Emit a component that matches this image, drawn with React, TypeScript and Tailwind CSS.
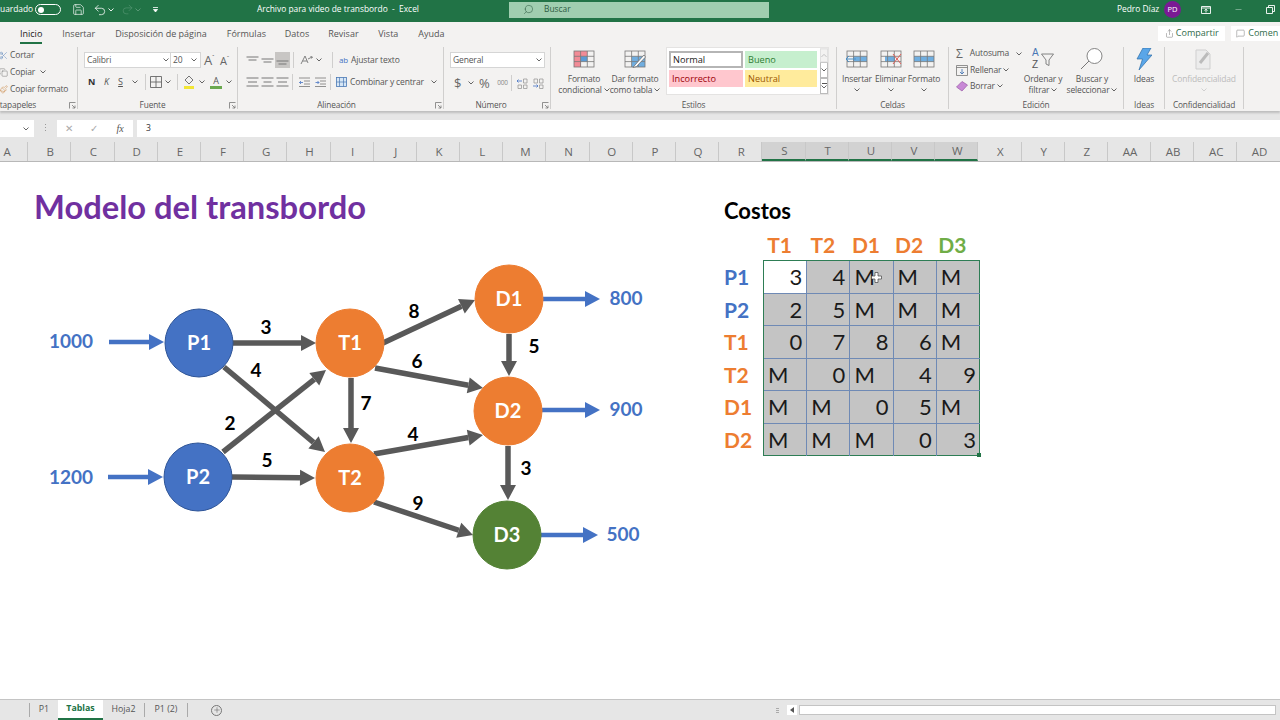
import React from "react";
import { Search, Scissors, Copy, Paintbrush, Save, Undo2, Redo2, Minus, Share, MessageSquare, Plus } from "lucide-react";

const Chev = ({ c = "#555" }: { c?: string }) => (
  <svg width="6" height="4" viewBox="0 0 6 4" className="shrink-0"><path d="M0.5 0.5 L3 3 L5.5 0.5" fill="none" stroke={c} strokeWidth="0.9" /></svg>
);
const Launcher = () => (
  <svg width="7" height="7" viewBox="0 0 7 7"><path d="M0.5 6.5V0.5H6.5M3 3l3 3M6 3.5V6H3.5" fill="none" stroke="#777" strokeWidth="0.8" /></svg>
);
const Lines = ({ w = [12, 12, 12], y = [2, 6, 10] }: { w?: number[]; y?: number[] }) => (
  <svg width="13" height="12" viewBox="0 0 13 12" className="shrink-0">
    {w.map((wi, i) => (
      <line key={i} x1={(13 - wi) / 2} x2={(13 + wi) / 2} y1={y[i]} y2={y[i]} stroke="#777" strokeWidth="1" />
    ))}
  </svg>
);
const VSep = () => <div className="w-px h-[16px] bg-[#cfcecd] shrink-0" />;
const GSep = () => <div className="w-px h-[62px] self-center bg-[#d0cfce] shrink-0" />;

const Group = ({ w, label, launcher, children, labelClass }: { w: string; label: string; launcher?: boolean; children: React.ReactNode; labelClass?: string }) => (
  <div className={`${w} flex flex-col shrink-0 h-[67px]`}>
    <div className="h-[55px] shrink-0 flex flex-col">{children}</div>
    <div className="relative h-[12px] flex items-center justify-center">
      <span className={`text-[8.3px] text-[#555] ${labelClass ?? ""}`}>{label}</span>
      {launcher && <span className="absolute right-[1px] top-[3px] flex"><Launcher /></span>}
    </div>
  </div>
);

const GridIcon = ({ children, w = 22, h = 18 }: { children: React.ReactNode; w?: number; h?: number }) => (
  <svg width={w} height={h} viewBox="0 0 22 18" className="shrink-0">{children}</svg>
);
const tableLines = (
  <g fill="none" stroke="#777" strokeWidth="0.8">
    <rect x="1" y="1" width="20" height="16" />
    <path d="M1 6.3H21M1 11.6H21M7.6 1V17M14.3 1V17" />
  </g>
);

const LargeBtn = ({ icon, l1, l2, w }: { icon: React.ReactNode; l1: string; l2: React.ReactNode; w: string }) => (
  <div className={`${w} shrink-0 flex flex-col items-center`}>
    <div className="h-[24px] mt-[3px] flex items-center justify-center">{icon}</div>
    <div className="text-[8.5px] tracking-[-0.15px] leading-[11px] mt-[2px] whitespace-nowrap text-[#555]">{l1}</div>
    <div className="text-[8.5px] tracking-[-0.15px] leading-[11px] whitespace-nowrap flex items-center gap-[2px] h-[11px] text-[#555]">{l2}</div>
  </div>
);

const columns = ["A","B","C","D","E","F","G","H","I","J","K","L","M","N","O","P","Q","R","S","T","U","V","W","X","Y","Z","AA","AB","AC","AD"];
const selected = new Set(["S","T","U","V","W"]);

const tableRows: { label: string; cls: string; cells: string[] }[] = [
  { label: "P1", cls: "text-[#4472c4]", cells: ["3","4","M","M","M"] },
  { label: "P2", cls: "text-[#4472c4]", cells: ["2","5","M","M","M"] },
  { label: "T1", cls: "text-[#ed7d31]", cells: ["0","7","8","6","M"] },
  { label: "T2", cls: "text-[#ed7d31]", cells: ["M","0","M","4","9"] },
  { label: "D1", cls: "text-[#ed7d31]", cells: ["M","M","0","5","M"] },
  { label: "D2", cls: "text-[#ed7d31]", cells: ["M","M","M","0","3"] },
];

const Arrow = ({ x1, y1, x2, y2, color, sw = 5.5, hl = 15, hw = 16 }: { x1: number; y1: number; x2: number; y2: number; color: string; sw?: number; hl?: number; hw?: number }) => {
  const d = Math.hypot(x2 - x1, y2 - y1);
  const ux = (x2 - x1) / d;
  const uy = (y2 - y1) / d;
  const bx = x2 - ux * hl;
  const by = y2 - uy * hl;
  return (
    <g>
      <line x1={x1} y1={y1} x2={bx} y2={by} stroke={color} strokeWidth={sw} />
      <polygon points={`${x2},${y2} ${bx - (uy * hw) / 2},${by + (ux * hw) / 2} ${bx + (uy * hw) / 2},${by - (ux * hw) / 2}`} fill={color} />
    </g>
  );
};

const gray = "#595959";
const blue = "#4472c4";
const arrows = [
  [233,343,316,343],[224,367,325,452],[223,452,326,370],[232,477,315,478],
  [383,343,475,300],[375,368,483,388],[351,378,351,443],[374,454,483,435],[374,502,473,535],
  [509,334,509,376],[508,446,508,500],
];
const blueArrows = [[109,342,164,342],[108,477,163,477],[543,299,600,299],[542,410,600,410],[541,535,598,535]];
const nodes: [number, number, string, string, string][] = [
  [199,343,"P1","#4472c4","#2f5597"],[198,477,"P2","#4472c4","#2f5597"],
  [350,343,"T1","#ed7d31","#ed7d31"],[350,478,"T2","#ed7d31","#ed7d31"],
  [509,299,"D1","#ed7d31","#ed7d31"],[508,411,"D2","#ed7d31","#ed7d31"],[507,535,"D3","#548235","#548235"],
];
const blueLabels: [number, number, string][] = [[71,341,"1000"],[71,477,"1200"],[626,298,"800"],[626,409,"900"],[623,534,"500"]];
const blackLabels: [number, number, string][] = [[266,327,"3"],[256,370,"4"],[230,423,"2"],[267,460,"5"],[414,311,"8"],[417,361,"6"],[366,403,"7"],[413,434,"4"],[418,503,"9"],[534,346,"5"],[526,468,"3"]];

export default function App() {
  return (
    <div className="w-[1280px] h-[720px] overflow-hidden flex flex-col bg-white text-[#444] [font-family:'Open_Sans',sans-serif]">
      {/* Title bar */}
      <div className="h-[22px] shrink-0 bg-[#217346] flex items-center pb-[3px] text-white text-[8.4px]">
        <span className="w-[35px] shrink-0">uardado</span>
        <div className="w-[26px] h-[11px] rounded-full border border-white flex items-center pl-[2px] shrink-0">
          <div className="w-[6px] h-[6px] rounded-full bg-white" />
        </div>
        <Save size={13} strokeWidth={1.2} className="ml-[11px] shrink-0" />
        <Undo2 size={14} strokeWidth={1.3} className="ml-[8px] shrink-0" />
        <span className="ml-[1px]"><Chev c="#fff" /></span>
        <Redo2 size={13} strokeWidth={1} className="ml-[7px] text-[#5f9c7b] shrink-0" />
        <span className="ml-[1px]"><Chev c="#5f9c7b" /></span>
        <svg width="7" height="7" viewBox="0 0 7 7" className="ml-[11px] shrink-0"><path d="M1 1.5H6M1.5 3.5L3.5 6L5.5 3.5Z" stroke="#fff" strokeWidth="0.8" fill="#fff" /></svg>
        <span className="ml-[98px] w-[252px] shrink-0 whitespace-pre">Archivo para video de transbordo  -  Excel</span>
        <div className="w-[260px] h-[16px] bg-[#a0ceb0] flex items-center text-[#2d5c42] shrink-0">
          <Search size={11} strokeWidth={1.2} className="ml-[14px] -scale-x-100" />
          <span className="ml-[10px]">Buscar</span>
        </div>
        <span className="ml-[348px] w-[47px] shrink-0 whitespace-nowrap">Pedro Díaz</span>
        <div className="w-[17px] h-[17px] rounded-full bg-[#7a1a94] flex items-center justify-center text-[7.5px] shrink-0">PD</div>
        <svg width="10" height="8" viewBox="0 0 10 8" className="ml-[20px] shrink-0"><path d="M0.5 0.5H9.5V7.5H0.5ZM0.5 2H9.5M5 3.5V6.5M3.5 4.5L5 3.2L6.5 4.5" fill="none" stroke="#fff" strokeWidth="0.9" /></svg>
        <Minus size={9} strokeWidth={1} className="ml-[23px] shrink-0" />
        <svg width="9" height="9" viewBox="0 0 9 9" className="ml-[23px] shrink-0"><path d="M2.5 2.5V0.5H8.5V6.5H6.5M0.5 2.5H6.5V8.5H0.5Z" fill="none" stroke="#fff" strokeWidth="0.9" /></svg>
      </div>

      {/* Tabs row */}
      <div className="h-[22px] shrink-0 bg-[#f3f2f1] flex items-center text-[9px] text-[#555] whitespace-nowrap">
        <div className="ml-[20px] w-[23px] h-[22px] pt-[1px] flex items-center justify-center relative text-[#222]">
          Inicio
          <div className="absolute bottom-0 left-0 right-0 h-[2px] bg-[#217346]" />
        </div>
        <span className="ml-[20px] w-[33px] pt-[1px]">Insertar</span>
        <span className="ml-[20px] w-[93px] pt-[1px]">Disposición de página</span>
        <span className="ml-[20px] w-[38px] pt-[1px]">Fórmulas</span>
        <span className="ml-[20px] w-[25px] pt-[1px]">Datos</span>
        <span className="ml-[19px] w-[30px] pt-[1px]">Revisar</span>
        <span className="ml-[20px] w-[20px] pt-[1px]">Vista</span>
        <span className="ml-[20px] w-[26px] pt-[1px]">Ayuda</span>
        <div className="ml-[714px] w-[67px] h-[15px] bg-white flex items-center justify-center gap-[2px] text-[#2f6b4b] shrink-0">
          <Share size={9} strokeWidth={1.2} className="text-[#666]" />
          <span>Compartir</span>
        </div>
        <div className="ml-[6px] w-[60px] h-[15px] bg-white flex items-center gap-[3px] pl-[5px] text-[#2f6b4b] shrink-0 overflow-hidden">
          <MessageSquare size={9} strokeWidth={1.2} className="text-[#666] shrink-0" />
          <span>Comen</span>
        </div>
      </div>

      {/* Ribbon */}
      <div className="h-[67px] shrink-0 bg-[#f3f2f1] flex shadow-[0_2px_2px_rgba(0,0,0,0.18)] relative z-10 text-[8.5px] tracking-[-0.15px] text-[#555] whitespace-nowrap">
        <Group w="w-[77px]" label="tapapeles" launcher labelClass="-ml-[41px]">
          <div className="pt-[2px] flex flex-col">
            <div className="h-[17px] pt-[1px] flex items-center gap-[2px] -ml-[1px]"><Scissors size={9} strokeWidth={1.2} className="text-[#4a78b5] w-[9px]" /><span>Cortar</span></div>
            <div className="h-[17px] pt-[1px] flex items-center gap-[2px] -ml-[1px]"><Copy size={9} strokeWidth={1.2} className="text-[#666] w-[9px]" /><span>Copiar</span><span className="ml-[3px]"><Chev /></span></div>
            <div className="h-[17px] pt-[1px] flex items-center gap-[2px] -ml-[1px]"><Paintbrush size={9} strokeWidth={1.2} className="text-[#c77f35] w-[9px]" /><span>Copiar formato</span></div>
          </div>
        </Group>
        <GSep />
        <Group w="w-[159px]" label="Fuente" launcher labelClass="-ml-[10px]">
          <div className="pl-[6px] pt-[8px] flex items-center">
            <div className="w-[87px] h-[16px] bg-white border border-[#d5d5d5] flex items-center pl-[2px] shrink-0"><span className="w-[76px]">Calibri</span><Chev /></div>
            <div className="w-[30px] h-[16px] bg-white border border-[#d5d5d5] border-l-0 flex items-center pl-[2px] shrink-0"><span className="w-[18px]">20</span><Chev /></div>
            <span className="ml-[3px] w-[16px] text-[13px] text-[#666] leading-none flex">A<span className="text-[6px]">ˆ</span></span>
            <span className="w-[15px] text-[11px] text-[#666] leading-none flex">A<span className="text-[6px]">ˇ</span></span>
          </div>
          <div className="pl-[6px] mt-[6px] h-[16px] flex items-center">
            <span className="w-[15px] font-bold text-[#333] text-[9px] text-center">N</span>
            <span className="w-[15px] italic text-center text-[9px]">K</span>
            <span className="w-[13px] underline text-center text-[9px]">S</span>
            <span className="w-[14px] pl-[5px]"><Chev /></span>
            <span className="ml-[4px]"><VSep /></span>
            <svg width="12" height="12" viewBox="0 0 12 12" className="ml-[4px] shrink-0"><path d="M0.5 0.5H11.5V11.5H0.5ZM6 0.5V11.5M0.5 6H11.5" fill="none" stroke="#666" strokeWidth="0.9" /></svg>
            <span className="ml-[3px] w-[12px]"><Chev /></span>
            <VSep />
            <svg width="12" height="14" viewBox="0 0 12 14" className="ml-[5px] shrink-0"><path d="M6 1L10 5L6 9L2 5Z" fill="none" stroke="#666" strokeWidth="0.9" /><rect x="1" y="11" width="10" height="3" fill="#f2e635" /></svg>
            <span className="ml-[4px] w-[11px]"><Chev /></span>
            <span className="w-[12px] relative h-[14px] flex justify-center text-[9px] leading-[11px]">A<span className="absolute left-0 right-0 bottom-0 h-[3px] bg-[#6aa84f]" /></span>
            <span className="ml-[4px]"><Chev /></span>
          </div>
        </Group>
        <GSep />
        <Group w="w-[205px]" label="Alineación" launcher labelClass="-ml-[8px]">
          <div className="pl-[8px] pt-[8px] flex items-center h-[24px]">
            <Lines w={[12,8,0]} y={[3,6,20]} />
            <span className="ml-[2px]"><Lines w={[12,8,0]} y={[5,8,20]} /></span>
            <div className="ml-[1px] w-[15px] h-[16px] bg-[#c8c6c4] flex items-center justify-center"><Lines w={[12,8,0]} y={[7,10,20]} /></div>
            <span className="ml-[3px]"><VSep /></span>
            <svg width="13" height="11" viewBox="0 0 13 11" className="ml-[6px] shrink-0"><path d="M1 9L5 1L8 8M2.5 6H7M8 4L12 2M10.5 1.5L12.5 2L11.5 3.5" fill="none" stroke="#777" strokeWidth="0.9" /></svg>
            <span className="ml-[3px] w-[16px]"><Chev /></span>
            <VSep />
            <span className="ml-[6px] text-[#4472c4] text-[8px] leading-none w-[12px]">ab</span>
            <span>Ajustar texto</span>
          </div>
          <div className="pl-[8px] mt-[6px] h-[16px] flex items-center">
            <Lines w={[12,9,12]} y={[2,6,10]} />
            <span className="ml-[2px]"><Lines w={[12,8,12]} y={[2,6,10]} /></span>
            <span className="ml-[2px]"><Lines w={[12,9,12]} y={[2,6,10]} /></span>
            <span className="ml-[3px]"><VSep /></span>
            <svg width="11" height="10" viewBox="0 0 11 10" className="ml-[6px] shrink-0"><path d="M0 1H11M5 4H11M5 7H11M0 9.5H11" stroke="#777" strokeWidth="0.8" /><path d="M4 5.5H0.5M2 4L0.5 5.5L2 7" fill="none" stroke="#4472c4" strokeWidth="0.8" /></svg>
            <svg width="11" height="10" viewBox="0 0 11 10" className="ml-[5px] shrink-0"><path d="M0 1H11M5 4H11M5 7H11M0 9.5H11" stroke="#777" strokeWidth="0.8" /><path d="M0.5 5.5H4M2.5 4L4 5.5L2.5 7" fill="none" stroke="#4472c4" strokeWidth="0.8" /></svg>
            <span className="ml-[4px]"><VSep /></span>
            <svg width="11" height="10" viewBox="0 0 11 10" className="ml-[5px] shrink-0"><rect x="0.5" y="0.5" width="10" height="9" fill="#d6e6f5" stroke="#4a78b5" strokeWidth="0.8" /><path d="M0.5 5H10.5M3.5 0.5V9.5M7.5 0.5V9.5" stroke="#4a78b5" strokeWidth="0.7" /></svg>
            <span className="ml-[3px] w-[81px]">Combinar y centrar</span>
            <Chev />
          </div>
        </Group>
        <GSep />
        <Group w="w-[106px]" label="Número" launcher labelClass="-ml-[12px]">
          <div className="pl-[6px] pt-[8px]">
            <div className="w-[95px] h-[16px] bg-white border border-[#d5d5d5] flex items-center justify-between px-[2px]"><span>General</span><Chev /></div>
          </div>
          <div className="pl-[10px] mt-[6px] h-[18px] flex items-center">
            <span className="text-[13px] text-[#666] w-[14px] leading-none">$</span>
            <span className="w-[11px]"><Chev /></span>
            <span className="text-[13px] text-[#666] w-[15px] leading-none">%</span>
            <span className="text-[6.5px] text-[#888] w-[17px] text-center">000</span>
            <VSep />
            <svg width="11" height="11" viewBox="0 0 11 11" className="ml-[5px] shrink-0"><path d="M0 3H5M1.5 1.5L0 3L1.5 4.5" fill="none" stroke="#4472c4" strokeWidth="0.8" /><path d="M6.5 1H10V5H6.5ZM1 7H4.5V10.5H1ZM6.5 7H10V10.5H6.5Z" fill="none" stroke="#999" strokeWidth="0.8" /></svg>
            <svg width="11" height="11" viewBox="0 0 11 11" className="ml-[5px] shrink-0"><path d="M0 8H5M3.5 6.5L5 8L3.5 9.5" fill="none" stroke="#4472c4" strokeWidth="0.8" /><path d="M6.5 1H10V5H6.5ZM1 1H4.5V5H1ZM6.5 7H10V10.5H6.5Z" fill="none" stroke="#999" strokeWidth="0.8" /></svg>
          </div>
        </Group>
        <GSep />
        <Group w="w-[285px]" label="Estilos">
          <div className="flex">
            <div className="w-[7px] shrink-0" />
            <LargeBtn w="w-[52px]" l1="Formato" l2={<>condicional <Chev /></>} icon={
              <GridIcon>
                <rect x="1" y="1" width="7" height="16" fill="#f28b96" />
                <rect x="7.6" y="1" width="6.7" height="5.3" fill="#f28b96" />
                <rect x="7.6" y="6.3" width="6.7" height="5.3" fill="#5b9bd5" />
                {tableLines}
              </GridIcon>
            } />
            <LargeBtn w="w-[50px]" l1="Dar formato" l2={<>como tabla <Chev /></>} icon={
              <GridIcon>
                <rect x="7.6" y="6.3" width="13.4" height="10.7" fill="#70aee0" />
                {tableLines}
                <path d="M20 5L11 15L9 17.5L12.5 16.5L21.5 7Z" fill="#fff" stroke="#666" strokeWidth="0.7" />
              </GridIcon>
            } />
            <div className="ml-[6px] mt-[3px] w-[163px] h-[48px] bg-white flex border border-[#e4e3e2] shrink-0">
              <div className="w-[150px] shrink-0 grid grid-cols-[74px_72px] gap-x-[2px] gap-y-[2px] pl-[2px] pt-[3px] text-[9.2px] tracking-normal auto-rows-[17px]">
                <div className="border-2 border-[#b5b5b5] bg-white text-[#222] flex items-center pl-[2px]">Normal</div>
                <div className="bg-[#c6efce] text-[#2f7d33] flex items-center pl-[3px]">Bueno</div>
                <div className="bg-[#ffc7ce] text-[#9c0006] flex items-center pl-[3px]">Incorrecto</div>
                <div className="bg-[#ffeb9c] text-[#9c5700] flex items-center pl-[3px]">Neutral</div>
              </div>
              <div className="ml-[3px] w-[10px] flex flex-col bg-[#f3f2f1]">
                <div className="h-[15px] border border-[#e0e0e0] flex items-center justify-center rotate-180"><Chev c="#bbb" /></div>
                <div className="h-[16px] border border-[#bbb] bg-white flex items-center justify-center"><Chev /></div>
                <div className="h-[17px] border border-[#bbb] bg-white flex flex-col gap-[1px] items-center justify-center"><div className="w-[5px] h-px bg-[#555]" /><Chev /></div>
              </div>
            </div>
          </div>
        </Group>
        <GSep />
        <Group w="w-[111px]" label="Celdas">
          <div className="flex pl-[3px]">
            <LargeBtn w="w-[34px]" l1="Insertar" l2={<Chev />} icon={
              <GridIcon><rect x="7" y="6.3" width="14" height="5.3" fill="#70aee0" />{tableLines}<path d="M10 9H0M3 6L0 9L3 12" fill="none" stroke="#4a90c8" strokeWidth="1" /></GridIcon>
            } />
            <LargeBtn w="w-[33px]" l1="Eliminar" l2={<Chev />} icon={
              <GridIcon><rect x="5" y="6.3" width="10" height="5.3" fill="#70aee0" />{tableLines}<path d="M13 4L21 14M21 4L13 14" fill="none" stroke="#e0605a" strokeWidth="1" /></GridIcon>
            } />
            <LargeBtn w="w-[34px]" l1="Formato" l2={<Chev />} icon={
              <GridIcon><rect x="1" y="6.3" width="20" height="5.3" fill="#70aee0" />{tableLines}</GridIcon>
            } />
          </div>
        </Group>
        <GSep />
        <Group w="w-[174px]" label="Edición">
          <div className="flex">
            <div className="w-[73px] pl-[7px] pt-[1px] flex flex-col shrink-0">
              <div className="h-[17px] flex items-center"><span className="w-[14px] text-[12px] leading-none text-[#666]">Σ</span><span className="w-[47px]">Autosuma</span><Chev /></div>
              <div className="h-[16px] flex items-center"><svg width="12" height="11" viewBox="0 0 12 11" className="mr-[2px] shrink-0"><path d="M0.5 0.5H11.5V10.5H0.5ZM0.5 2.5H11.5" fill="none" stroke="#777" strokeWidth="0.8" /><path d="M6 4V9M4 7L6 9L8 7" fill="none" stroke="#4a78b5" strokeWidth="0.9" /></svg><span className="mr-[2px]">Rellenar</span><Chev /></div>
              <div className="h-[16px] flex items-center"><svg width="12" height="11" viewBox="0 0 12 11" className="mr-[2px] shrink-0"><path d="M0.5 6L6 0.5L11.5 4L6 10Z" fill="#c889d6" stroke="#9a5aa8" strokeWidth="0.7" /></svg><span className="mr-[2px]">Borrar</span><Chev /></div>
            </div>
            <div className="ml-[-2px]"><LargeBtn w="w-[46px]" l1="Ordenar y" l2={<>filtrar <Chev /></>} icon={
              <div className="w-[22px] h-[24px] flex items-center">
                <div className="w-[9px] flex flex-col text-[10px] leading-[12px] tracking-normal [font-family:'Liberation_Sans',sans-serif]">
                  <span className="text-[#4a78b5]">A</span>
                  <span className="text-[#555]">Z</span>
                </div>
                <svg width="13" height="13" viewBox="0 0 13 13" className="shrink-0"><path d="M0.5 1H12.5L8 7V12.5L5 11V7Z" fill="none" stroke="#777" strokeWidth="0.9" /></svg>
              </div>
            } /></div>
            <LargeBtn w="w-[52px]" l1="Buscar y" l2={<>seleccionar <Chev /></>} icon={
              <svg width="24" height="22" viewBox="0 0 24 22" className="shrink-0"><circle cx="14.5" cy="8" r="7.5" fill="#fff" stroke="#777" strokeWidth="0.9" /><path d="M9 13L1 21" stroke="#777" strokeWidth="1" /></svg>
            } />
          </div>
        </Group>
        <GSep />
        <Group w="w-[40px]" label="Ideas">
          <LargeBtn w="w-[40px]" l1="Ideas" l2={null} icon={
            <svg width="16" height="22" viewBox="0 0 16 22" className="shrink-0"><path d="M7 0H15L11 7H16L3 22L6.5 11H1Z" fill="#5aa6e8" stroke="#2f6fa8" strokeWidth="0.7" /></svg>
          } />
        </Group>
        <GSep />
        <Group w="w-[78px]" label="Confidencialidad">
          <div className="flex flex-col items-center">
            <div className="h-[24px] mt-[3px] flex items-center"><svg width="18" height="22" viewBox="0 0 18 22"><path d="M1 2H11L15 6V21H1Z" fill="#ececec" stroke="#cfcfcf" /><path d="M5 15L13 5" stroke="#bbb" strokeWidth="3" /></svg></div>
            <div className="text-[8.5px] leading-[11px] mt-[2px] text-[#bcbcbc]">Confidencialidad</div>
            <div className="h-[11px] flex items-center"><Chev c="#ccc" /></div>
          </div>
        </Group>
        <GSep />
      </div>

      {/* Formula bar */}
      <div className="h-[31px] shrink-0 bg-[#e6e6e6] flex items-start pt-[9px] text-[8.6px]">
        <div className="w-[34px] h-[17px] bg-white flex items-center justify-end pr-[5px] shrink-0"><Chev /></div>
        <div className="w-[23px] shrink-0 flex flex-col items-center gap-[2px] pt-[4px]">
          <div className="w-px h-px bg-[#999]" /><div className="w-px h-px bg-[#999]" /><div className="w-px h-px bg-[#999]" />
        </div>
        <div className="w-[76px] h-[17px] bg-white flex items-center text-[#aaa] shrink-0">
          <span className="w-[24px] text-center text-[10px]">✕</span>
          <span className="w-[26px] text-center text-[10px]">✓</span>
          <span className="w-[26px] text-center text-[#555] italic [font-family:'Liberation_Serif',serif] text-[10px]">fx</span>
        </div>
        <div className="ml-[4px] flex-1 h-[17px] bg-white flex items-center pl-[9px] text-[#333]">3</div>
      </div>

      {/* Column headers */}
      <div className="h-[20px] shrink-0 bg-[#e6e6e6] flex -ml-[15px] text-[11.5px] text-[#666] border-b border-[#b8b8b8]">
        {columns.map((c) => (
          <div
            key={c}
            className={`w-[43.2px] shrink-0 flex items-center justify-center pl-[2px] pt-[1px] border-r border-[#c8c8c8] ${selected.has(c) ? "bg-[#d2d2d2] border-b-2 border-b-[#217346]" : ""}`}
          >
            {c}
          </div>
        ))}
      </div>

      {/* Sheet */}
      <div className="flex-1 min-h-0 bg-white flex [font-family:Lato,sans-serif]">
        <div className="w-[690px] shrink-0 flex flex-col">
          <div className="mt-[24px] h-[41px] pl-[34px] flex items-center text-[32.7px] font-bold text-[#7030a0] whitespace-nowrap">Modelo del transbordo</div>
          <svg width="690" height="400" viewBox="0 227 690 400">
            {arrows.map((a, i) => <Arrow key={i} x1={a[0]} y1={a[1]} x2={a[2]} y2={a[3]} color={gray} />)}
            {blueArrows.map((a, i) => <Arrow key={i} x1={a[0]} y1={a[1]} x2={a[2]} y2={a[3]} color={blue} sw={4.5} />)}
            {nodes.map(([x, y, t, f, s]) => (
              <g key={t}>
                <circle cx={x} cy={y} r={34} fill={f} stroke={s} strokeWidth="1" />
                <text x={x} y={y + 7} textAnchor="middle" fill="#fff" fontSize="20" fontWeight="700">{t}</text>
              </g>
            ))}
            {blueLabels.map(([x, y, t]) => <text key={t} x={x} y={y + 7} textAnchor="middle" fill="#4472c4" fontSize="19" fontWeight="700">{t}</text>)}
            {blackLabels.map(([x, y, t], i) => <text key={i} x={x} y={y + 7} textAnchor="middle" fill="#000" fontSize="19" fontWeight="700">{t}</text>)}
          </svg>
        </div>
        <div className="ml-[34px] flex flex-col">
          <div className="mt-[35px] h-[26px] flex items-center text-[22px] font-bold text-black">Costos</div>
          <div className="mt-[6px] h-[31px] pl-[34px] flex text-[21px] font-bold">
            <div className="w-[43.2px] text-center text-[#ed7d31]">T1</div>
            <div className="w-[43.2px] text-center text-[#ed7d31]">T2</div>
            <div className="w-[43.2px] text-center text-[#ed7d31]">D1</div>
            <div className="w-[43.2px] text-center text-[#ed7d31]">D2</div>
            <div className="w-[43.2px] text-center text-[#70ad47]">D3</div>
          </div>
          <div className="flex">
            <div className="w-[39px] shrink-0 flex flex-col text-[21px] font-bold">
              {tableRows.map((r) => (
                <div key={r.label} className={`h-[32.6px] pt-[1px] flex items-center ${r.cls}`}>{r.label}</div>
              ))}
            </div>
            <div className="relative border border-[#2e7d55] grid grid-cols-[repeat(5,43.2px)] auto-rows-[32.5px] w-[217px] h-[196px] bg-[#c4c4c4] text-[22px] text-[#1a1a1a]">
              {tableRows.map((r, ri) =>
                r.cells.map((c, ci) => (
                  <div
                    key={`${ri}-${ci}`}
                    className={`relative flex items-center border-[#6f8ab5] ${ci < 4 ? "border-r" : ""} ${ri < 5 ? "border-b" : ""} ${c === "M" ? "justify-start pl-[4px]" : "justify-end pr-[4px]"} ${ri === 0 && ci === 0 ? "bg-white" : ""}`}
                  >
                    {c}
                    {ri === 0 && ci === 2 && (
                      <svg width="11" height="11" viewBox="0 0 11 11" className="absolute left-[21px] top-[11px]">
                        <path d="M4 0.5H7V4H10.5V7H7V10.5H4V7H0.5V4H4Z" fill="#fff" stroke="#444" strokeWidth="0.7" />
                      </svg>
                    )}
                  </div>
                ))
              )}
              <div className="absolute -right-[2px] -bottom-[2px] w-[4px] h-[4px] bg-[#217346]" />
            </div>
          </div>
        </div>
      </div>

      {/* Sheet tabs */}
      <div className="h-[21px] shrink-0 bg-[#e6e6e6] border-t border-[#c4c4c4] flex items-stretch text-[8.8px] text-[#555]">
        <div className="w-[30px] shrink-0 border-r border-[#aaa] my-[3px]" />
        <div className="w-[28px] shrink-0 flex items-center justify-center">P1</div>
        <div className="w-[45px] shrink-0 bg-white border-b-2 border-[#217346] flex items-center justify-center font-bold text-[#217346]">Tablas</div>
        <div className="w-[42px] shrink-0 flex items-center justify-center my-[3px] border-r border-[#aaa]">Hoja2</div>
        <div className="w-[43px] shrink-0 flex items-center justify-center my-[3px] border-r border-[#aaa]">P1 (2)</div>
        <div className="ml-[23px] w-[12px] shrink-0 flex items-center">
          <div className="w-[11px] h-[11px] rounded-full border border-[#777] flex items-center justify-center"><Plus size={8} strokeWidth={1.5} /></div>
        </div>
        <div className="ml-[553px] w-[10px] shrink-0 flex items-center"><div className="flex flex-col gap-[1px]"><div className="w-[3px] h-px bg-[#aaa]" /><div className="w-[3px] h-px bg-[#aaa]" /><div className="w-[3px] h-px bg-[#aaa]" /></div></div>
        <div className="ml-[1px] w-[10px] h-[10px] self-center bg-white flex items-center justify-center shrink-0">
          <div className="w-0 h-0 border-y-[3px] border-y-transparent border-r-[4px] border-r-[#555]" />
        </div>
        <div className="ml-[2px] w-[477px] h-[10px] self-center bg-white border border-[#c4c4c4] shrink-0" />
      </div>
    </div>
  );
}
